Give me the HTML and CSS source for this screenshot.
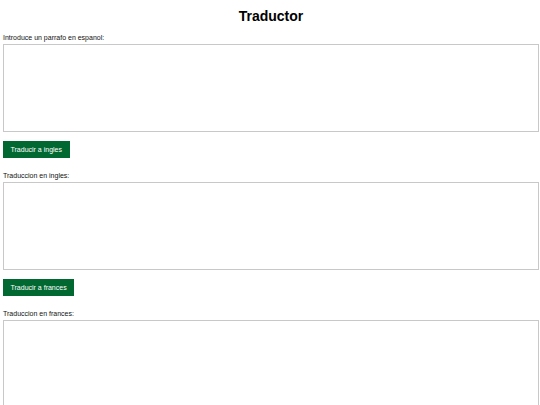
FILE: index.html
```html
<!DOCTYPE html>
<html lang="es">
<head>
<meta charset="utf-8">
<title>Traductor</title>
<link rel="stylesheet" href="styles.css">
</head>
<body>
<main class="page">
  <h1 class="title">Traductor</h1>
  <section class="block">
    <label class="label" for="es">Introduce un parrafo en espanol:</label>
    <textarea id="es" class="box"></textarea>
  </section>
  <button class="btn">Traducir a ingles</button>
  <section class="block">
    <label class="label" for="en">Traduccion en ingles:</label>
    <textarea id="en" class="box"></textarea>
  </section>
  <button class="btn">Traducir a frances</button>
  <section class="block">
    <label class="label" for="fr">Traduccion en frances:</label>
    <textarea id="fr" class="box"></textarea>
  </section>
</main>
</body>
</html>
```
FILE: styles.css
```css
html, body {
  margin: 0;
  padding: 0;
  background: #fff;
}
body {
  font-family: "Liberation Sans", Arial, sans-serif;
  color: #000;
}
.page {
  display: flex;
  flex-direction: column;
  align-items: flex-start;
  padding: 0 1px 0 3px;
}
.title {
  align-self: stretch;
  text-align: center;
  font-size: 14px;
  font-weight: bold;
  margin: 8px 0 8px;
  line-height: 17px;
}
.block {
  align-self: stretch;
  display: flex;
  flex-direction: column;
}
.label {
  font-size: 7px;
  line-height: 9px;
  margin-bottom: 2px;
  color: #111;
}
.box {
  box-sizing: border-box;
  width: 100%;
  height: 88px;
  margin: 0;
  border: 1px solid #c8c8c8;
  resize: none;
  background: #fff;
}
.btn {
  margin: 9px 0 13px;
  background: #006830;
  color: #fff;
  border: none;
  font-family: "Liberation Sans", Arial, sans-serif;
  font-size: 7px;
  height: 17px;
  padding: 0 7.5px;
}
```
